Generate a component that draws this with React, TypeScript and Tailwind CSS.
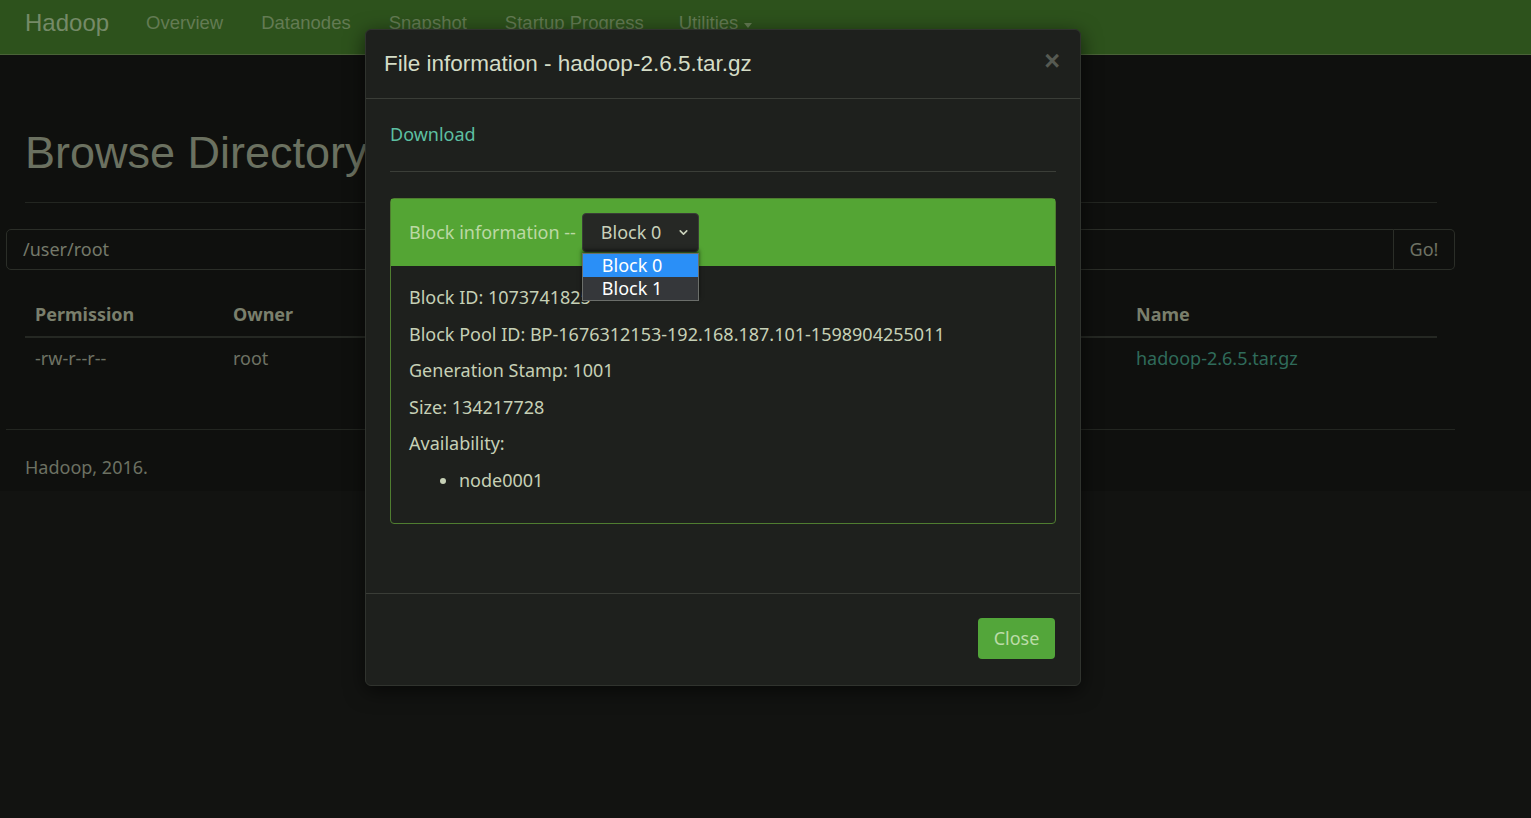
import { ChevronDown } from "lucide-react";

const navItems = ["Overview", "Datanodes", "Snapshot", "Startup Progress"];

const columns = [
  { label: "Permission", value: "-rw-r--r--", w: "w-[198px]" },
  { label: "Owner", value: "root", w: "w-[200px]" },
];

const blockLines = [
  "Block ID: 1073741825",
  "Block Pool ID: BP-1676312153-192.168.187.101-1598904255011",
  "Generation Stamp: 1001",
  "Size: 134217728",
  "Availability:",
];

const body = "font-['Noto_Sans',sans-serif]";
const arial = "font-['Liberation_Sans',Arial,sans-serif]";

function Navbar() {
  return (
    <nav className={`h-[55px] bg-[#2d521c] border-b border-[#4a6338] flex items-center pb-[8px] pl-[25px] ${arial}`}>
      <span className="text-[24px] text-[#758a68] mr-[37px]">Hadoop</span>
      <ul className="flex items-center gap-[38px] text-[18.5px] text-[#637b53]">
        {navItems.map((item) => (
          <li key={item}>{item}</li>
        ))}
        <li className="flex items-center gap-[6px] -ml-[3px]">
          Utilities
          <span className="inline-block w-0 h-0 border-l-[4px] border-r-[4px] border-t-[5px] border-l-transparent border-r-transparent border-t-[#637b53] mt-[4px]" />
        </li>
      </ul>
    </nav>
  );
}

function BrowsePage() {
  return (
    <div className={`bg-[#0f100e] ${body}`}>
      <div className="px-[25px] pr-[94px]">
        <h1 className={`${arial} text-[45px] text-[#6b7160] pt-[73px] pb-[24px] leading-[1.1] border-b border-[#232621]`}>
          Browse Directory
        </h1>
      </div>
      <div className="mx-[6px] w-[1449px] mt-[26px] flex h-[41px]">
        <div className="flex-1 border border-[#2b2e28] rounded-l-[5px] flex items-center pl-[16px] text-[18px] text-[#74796a]">
          /user/root
        </div>
        <div className="w-[61px] border border-l-0 border-[#2b2e28] rounded-r-[5px] flex items-center justify-center text-[18px] text-[#6e7264]">
          Go!
        </div>
      </div>
      <div className="mx-[25px] w-[1412px] mt-[23px]">
        <div className="flex h-[45px] items-center border-b-2 border-[#252823] text-[18px] font-bold text-[#7a7f6c]">
          {columns.map((c) => (
            <div key={c.label} className={`${c.w} pl-[10px]`}>
              {c.label}
            </div>
          ))}
          <div className="flex-1" />
          <div className="w-[311px] pl-[10px]">Name</div>
        </div>
        <div className="flex h-[42px] items-center text-[18px] text-[#6e7264]">
          {columns.map((c) => (
            <div key={c.label} className={`${c.w} pl-[10px]`}>
              {c.value}
            </div>
          ))}
          <div className="flex-1" />
          <div className="w-[311px] pl-[10px] text-[#2f6b5a]">hadoop-2.6.5.tar.gz</div>
        </div>
      </div>
      <div className="mx-[6px] w-[1449px] mt-[49px] border-t border-[#232621] pt-[24px] pb-[10px] pl-[19px] text-[18px] text-[#6c7162]">
        Hadoop, 2016.
      </div>
    </div>
  );
}

function BlockSelect() {
  return (
    <div className="relative">
      <div className="w-[117px] h-[39px] bg-[#262825] border border-[#3a3d37] rounded-[4px] flex items-center justify-between pl-[18px] pr-[8px] text-[18px] text-[#c9d1bb]">
        <span>Block 0</span>
        <ChevronDown size={13} strokeWidth={3} className="text-[#c9d1bb]" />
      </div>
      <div className="absolute left-0 top-[40px] w-[117px] border border-[#6b6e6a] bg-[#35373a] shadow-[0_-3px_4px_rgba(0,0,0,0.6)] text-[18px] text-white leading-[22px] z-10">
        <div className="bg-[#2a8ff7] pl-[19px] h-[23px]">Block 0</div>
        <div className="pl-[19px] h-[23px]">Block 1</div>
      </div>
    </div>
  );
}

function FileModal() {
  return (
    <div className="absolute left-[365px] top-[29px] w-[716px] bg-[#1e201d] border border-[#30332e] rounded-[6px] shadow-[0_5px_20px_rgba(0,0,0,0.6)]">
      <div className="h-[69px] border-b border-[#3a3d37] flex items-center justify-between pl-[18px] pr-[20px]">
        <h4 className={`${arial} text-[22.5px] text-[#d4dcc6]`}>File information - hadoop-2.6.5.tar.gz</h4>
        <span className={`${arial} text-[27px] font-bold text-[#565a52] leading-none -mt-[6px]`}>×</span>
      </div>
      <div className={`px-[24px] pt-[23px] pb-[69px] ${body}`}>
        <a className="block text-[18px] leading-[25px] text-[#5dbfa1]">Download</a>
        <hr className="border-0 border-t border-[#3b3e38] mt-[24px] mb-[26px]" />
        <div className="border border-[#4f7d30] rounded-[4px]">
          <div className="h-[67px] bg-[#54a534] flex items-center pl-[18px] gap-[6px] text-[18px] text-[#bcd9a4]">
            <span>Block information --</span>
            <BlockSelect />
          </div>
          <div className="px-[18px] pt-[19px] pb-[19px] text-[18px] leading-[24px] text-[#c6d0b6]">
            {blockLines.map((line) => (
              <p key={line} className="mb-[12.5px]">
                {line}
              </p>
            ))}
            <ul className="pl-[50px] list-disc mb-[12px]">
              <li>node0001</li>
            </ul>
          </div>
        </div>
      </div>
      <div className={`border-t border-[#3a3d37] flex justify-end pr-[25px] pt-[24px] pb-[26px] ${body}`}>
        <button className="w-[77px] h-[41px] bg-[#53a63a] rounded-[4px] text-[18px] text-[#bcdca8]">Close</button>
      </div>
    </div>
  );
}

export default function App() {
  return (
    <div className="relative min-h-screen bg-[#121311] overflow-hidden">
      <Navbar />
      <BrowsePage />
      <FileModal />
    </div>
  );
}
